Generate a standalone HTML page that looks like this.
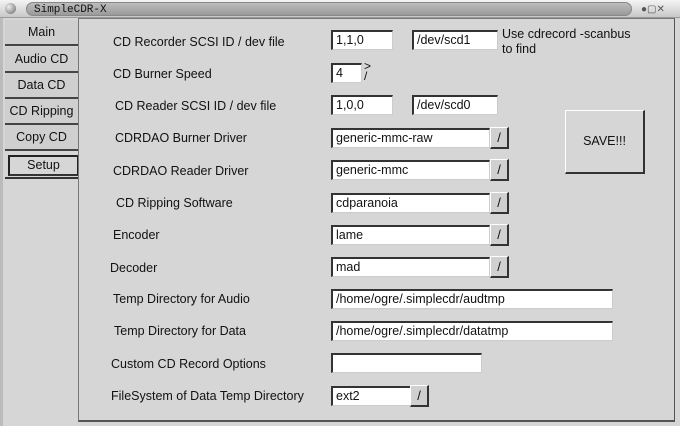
<!DOCTYPE html>
<html><head><style>
body{margin:0;width:680px;height:426px;background:#d6d6d6;font-family:"Liberation Sans",sans-serif;font-size:12px;color:#111;position:relative;overflow:hidden}
.a{position:absolute}
.title{left:0;top:0;width:680px;height:17px;background:linear-gradient(#f4f4f4,#c8c8c8);border-bottom:1px solid #999}
.tb{left:26px;top:2px;width:604px;height:12px;border-radius:7px;background:linear-gradient(#bcbcbc,#9a9a9a);border:1px solid #888;}
.tt{left:34px;top:4px;font-family:"Liberation Mono",monospace;font-size:11px}
.panel{left:78px;top:18px;width:595px;height:401px;border:1px solid #777;border-right-color:#555;border-bottom:2px solid #555;background:#d6d6d6}
.tab{left:5px;width:73px;height:24px;background:#cfcfcf;border-bottom:2px solid #444;text-align:center;line-height:24px;font-size:12.5px}
.lb{font-size:12.5px}
.in{height:20px;background:#fff;border:1px solid #555;border-right-color:#ccc;border-bottom-color:#ccc;border-top:2px solid #333;border-left:2px solid #333;box-sizing:border-box;padding-left:3px;line-height:17px;font-size:12.5px}
.bt{width:19px;height:22px;background:#d0d0d0;border:1px solid #fff;border-right:2px solid #333;border-bottom:2px solid #333;box-sizing:border-box;text-align:center;line-height:19px;font-size:13px}
</style></head><body>
<div class="a title"></div>
<div class="a" style="left:5px;top:3px;width:11px;height:11px;border-radius:50%;background:radial-gradient(circle at 35% 35%,#eee,#666)"></div>
<div class="a tb"></div>
<div class="a tt">SimpleCDR-X</div>
<div class="a" style="left:641px;top:4px;font-size:10px;color:#555">●▢✕</div>
<div class="a" style="left:0;top:18px;width:3px;height:408px;background:#bbb"></div>
<div class="a" style="left:5px;top:18px;width:73px;height:165px;background:#d6d6d6"></div>
<div class="a tab" style="top:20px">Main</div>
<div class="a tab" style="top:47px">Audio CD</div>
<div class="a tab" style="top:73px">Data CD</div>
<div class="a tab" style="top:99px">CD Ripping</div>
<div class="a tab" style="top:125px">Copy CD</div>
<div class="a" style="left:8px;top:155px;width:67px;height:17px;border:2px solid #222;border-bottom-color:#333;text-align:center;line-height:16px;font-size:12.5px;background:#d6d6d6">Setup</div>
<div class="a" style="left:5px;top:177px;width:73px;height:2px;background:#333"></div>
<div class="a panel"></div>

<div class="a lb" style="left:113px;top:35px">CD Recorder SCSI ID / dev file</div>
<div class="a in" style="left:331px;top:30px;width:62px">1,1,0</div>
<div class="a in" style="left:412px;top:30px;width:86px">/dev/scd1</div>
<div class="a lb" style="left:502px;top:27px;line-height:15px">Use cdrecord -scanbus<br>to find</div>

<div class="a lb" style="left:113px;top:67px">CD Burner Speed</div>
<div class="a in" style="left:331px;top:63px;width:31px">4</div>
<div class="a" style="left:364px;top:61px;font-size:12px;line-height:10px">&gt;<br>/</div>

<div class="a lb" style="left:115px;top:99px">CD Reader SCSI ID / dev file</div>
<div class="a in" style="left:331px;top:95px;width:62px">1,0,0</div>
<div class="a in" style="left:412px;top:95px;width:86px">/dev/scd0</div>

<div class="a" style="left:565px;top:110px;width:80px;height:64px;border:1px solid #fff;border-right:2px solid #333;border-bottom:2px solid #333;box-sizing:border-box;text-align:center;line-height:60px;font-size:12.5px">SAVE!!!</div>

<div class="a lb" style="left:115px;top:131px">CDRDAO Burner Driver</div>
<div class="a in" style="left:331px;top:128px;width:159px">generic-mmc-raw</div>
<div class="a bt" style="left:490px;top:127px">/</div>

<div class="a lb" style="left:113px;top:164px">CDRDAO Reader Driver</div>
<div class="a in" style="left:331px;top:160px;width:159px">generic-mmc</div>
<div class="a bt" style="left:490px;top:159px">/</div>

<div class="a lb" style="left:116px;top:196px">CD Ripping Software</div>
<div class="a in" style="left:331px;top:193px;width:159px">cdparanoia</div>
<div class="a bt" style="left:490px;top:192px">/</div>

<div class="a lb" style="left:113px;top:228px">Encoder</div>
<div class="a in" style="left:331px;top:225px;width:159px">lame</div>
<div class="a bt" style="left:490px;top:224px">/</div>

<div class="a lb" style="left:110px;top:261px">Decoder</div>
<div class="a in" style="left:331px;top:257px;width:159px">mad</div>
<div class="a bt" style="left:490px;top:256px">/</div>

<div class="a lb" style="left:113px;top:292px">Temp Directory for Audio</div>
<div class="a in" style="left:331px;top:289px;width:282px">/home/ogre/.simplecdr/audtmp</div>

<div class="a lb" style="left:114px;top:324px">Temp Directory for Data</div>
<div class="a in" style="left:331px;top:321px;width:282px">/home/ogre/.simplecdr/datatmp</div>

<div class="a lb" style="left:111px;top:357px">Custom CD Record Options</div>
<div class="a in" style="left:331px;top:353px;width:151px"></div>

<div class="a lb" style="left:111px;top:389px">FileSystem of Data Temp Directory</div>
<div class="a in" style="left:331px;top:386px;width:80px">ext2</div>
<div class="a bt" style="left:410px;top:385px">/</div>
</body></html>
